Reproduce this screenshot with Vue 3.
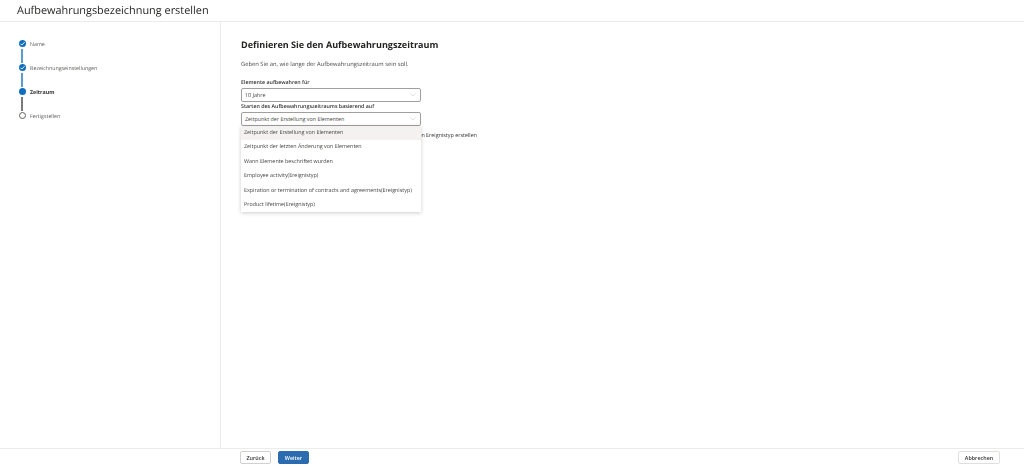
<template>
  <div class="wizard">
    <header class="top">
      <h1>Aufbewahrungsbezeichnung erstellen</h1>
    </header>

    <div class="middle">
      <aside class="side">
        <div v-for="(step, i) in steps" :key="step.label" class="step" :class="step.state">
          <div class="marker">
            <span class="dot">
              <svg v-if="step.state === 'done'" viewBox="0 0 8 8" width="7" height="7">
                <path d="M1.7 4.2 L3.3 5.8 L6.4 2.4" fill="none" stroke="#fff" stroke-width="1" />
              </svg>
            </span>
            <span v-if="i < steps.length - 1" class="line"></span>
          </div>
          <span class="step-label">{{ step.label }}</span>
        </div>
      </aside>

      <main class="content">
        <h2>Definieren Sie den Aufbewahrungszeitraum</h2>
        <p class="intro">Geben Sie an, wie lange der Aufbewahrungszeitraum sein soll.</p>

        <label class="field-label first">Elemente aufbewahren für</label>
        <div class="select">
          <span>10 Jahre</span>
          <svg class="chev" viewBox="0 0 8 5" width="6" height="4"><path d="M0.5 0.5 L4 4 L7.5 0.5" fill="none" stroke="#c4c4c4" stroke-width="0.8" /></svg>
        </div>

        <label class="field-label">Starten des Aufbewahrungszeitraums basierend auf</label>
        <div class="select-wrap">
          <div class="select">
            <span>Zeitpunkt der Erstellung von Elementen</span>
            <svg class="chev" viewBox="0 0 8 5" width="6" height="4"><path d="M0.5 0.5 L4 4 L7.5 0.5" fill="none" stroke="#c4c4c4" stroke-width="0.8" /></svg>
          </div>
          <ul class="menu">
            <li v-for="(opt, i) in options" :key="opt" :class="{ active: i === 0 }">{{ opt }}</li>
          </ul>
          <div class="behind">Neuen Ereignistyp erstellen</div>
        </div>
      </main>
    </div>

    <footer class="bottom">
      <div class="nav">
        <button class="btn">Zurück</button>
        <button class="btn primary">Weiter</button>
      </div>
      <button class="btn cancel">Abbrechen</button>
    </footer>
  </div>
</template>

<script setup>
const steps = [
  { label: 'Name', state: 'done' },
  { label: 'Bezeichnungseinstellungen', state: 'done' },
  { label: 'Zeitraum', state: 'current' },
  { label: 'Fertigstellen', state: 'todo' }
]

const options = [
  'Zeitpunkt der Erstellung von Elementen',
  'Zeitpunkt der letzten Änderung von Elementen',
  'Wann Elemente beschriftet wurden',
  'Employee activity(Ereignistyp)',
  'Expiration or termination of contracts and agreements(Ereignistyp)',
  'Product lifetime(Ereignistyp)'
]
</script>

<style>
html, body { margin: 0; background: #fff; }
</style>

<style scoped>
.wizard {
  width: 1024px;
  height: 467px;
  display: flex;
  flex-direction: column;
  font-family: "Open Sans", sans-serif;
  text-rendering: geometricPrecision;
  color: #323130;
  overflow: hidden;
  filter: blur(0.3px);
}

.top {
  height: 22px;
  flex: none;
  box-sizing: border-box;
  border-bottom: 1px solid #edebe9;
  padding-left: 17px;
}

.top h1 {
  margin: 0;
  font-size: 10.9px;
  line-height: 21px;
  font-weight: 500;
  color: #252423;
}

.middle {
  flex: 1;
  display: flex;
  min-height: 0;
}

.side {
  width: 221px;
  flex: none;
  box-sizing: border-box;
  border-right: 1px solid #edebe9;
  padding: 18px 0 0 18px;
}

.step {
  display: flex;
  height: 24px;
  font-size: 5.3px;
  color: #605e5c;
}

.marker {
  width: 8px;
  display: flex;
  flex-direction: column;
  align-items: center;
  margin-right: 4px;
}

.dot {
  width: 7px;
  height: 7px;
  flex: none;
  box-sizing: border-box;
  border-radius: 50%;
  background: #106ebe;
  display: flex;
  align-items: center;
  justify-content: center;
}

.line {
  width: 1.5px;
  height: 14px;
  margin-top: 2px;
  background: #5b9bd5;
}

.step.current .line {
  background: #7a7a7a;
}

.step.todo .dot {
  background: #fff;
  border: 1px solid #605e5c;
}

.step-label {
  line-height: 8px;
}

.step.current .step-label {
  font-weight: 700;
  color: #323130;
}

.content {
  padding: 16px 0 0 20px;
  flex: 1;
}

.content h2 {
  margin: 0;
  font-size: 9.05px;
  line-height: 13px;
  font-weight: 700;
  color: #252423;
}

.intro {
  margin: 9px 0 0;
  font-size: 5.8px;
  line-height: 9px;
  color: #4a4846;
}

.field-label {
  display: block;
  font-size: 5.3px;
  line-height: 9px;
  font-weight: 600;
  color: #323130;
  margin-bottom: 1px;
}

.field-label.first {
  margin-top: 9px;
}

.select {
  width: 180px;
  height: 14px;
  box-sizing: border-box;
  border: 1px solid #a19f9d;
  border-radius: 2px;
  padding: 0 3px;
  display: flex;
  align-items: center;
  justify-content: space-between;
  font-size: 5.4px;
  color: #484644;
  background: #fff;
}

.chev {
  margin-right: 1px;
}

.select-wrap {
  position: relative;
}

.menu {
  position: absolute;
  top: 14px;
  left: 0;
  width: 180px;
  margin: 0;
  padding: 0;
  list-style: none;
  background: #fff;
  box-shadow: 0 1px 4px rgba(0, 0, 0, 0.2);
  z-index: 2;
}

.menu li {
  height: 14.4px;
  line-height: 13.6px;
  padding-left: 3px;
  font-size: 5.4px;
  white-space: nowrap;
  color: #484644;
}

.menu li.active {
  background: #f3f2f1;
}

.behind {
  margin-top: 5px;
  padding-left: 167px;
  font-size: 5.4px;
  line-height: 9px;
  white-space: nowrap;
}

.bottom {
  height: 19px;
  flex: none;
  box-sizing: border-box;
  border-top: 1px solid #edebe9;
  display: flex;
  justify-content: space-between;
  align-items: flex-start;
  padding: 2px 24px 0 240px;
}

.nav {
  display: flex;
  gap: 7px;
}

.btn {
  height: 13px;
  padding: 0;
  width: 31px;
  box-sizing: border-box;
  border: 1px solid #d2d0ce;
  border-radius: 2px;
  background: #fff;
  color: #323130;
  font-family: inherit;
  font-size: 5.4px;
  font-weight: 600;
}

.btn.primary {
  background: #2b6cb0;
  border-color: #2b6cb0;
  color: #fff;
}

.btn.cancel {
  width: 42px;
  border-color: #e1dfdd;
}
</style>
